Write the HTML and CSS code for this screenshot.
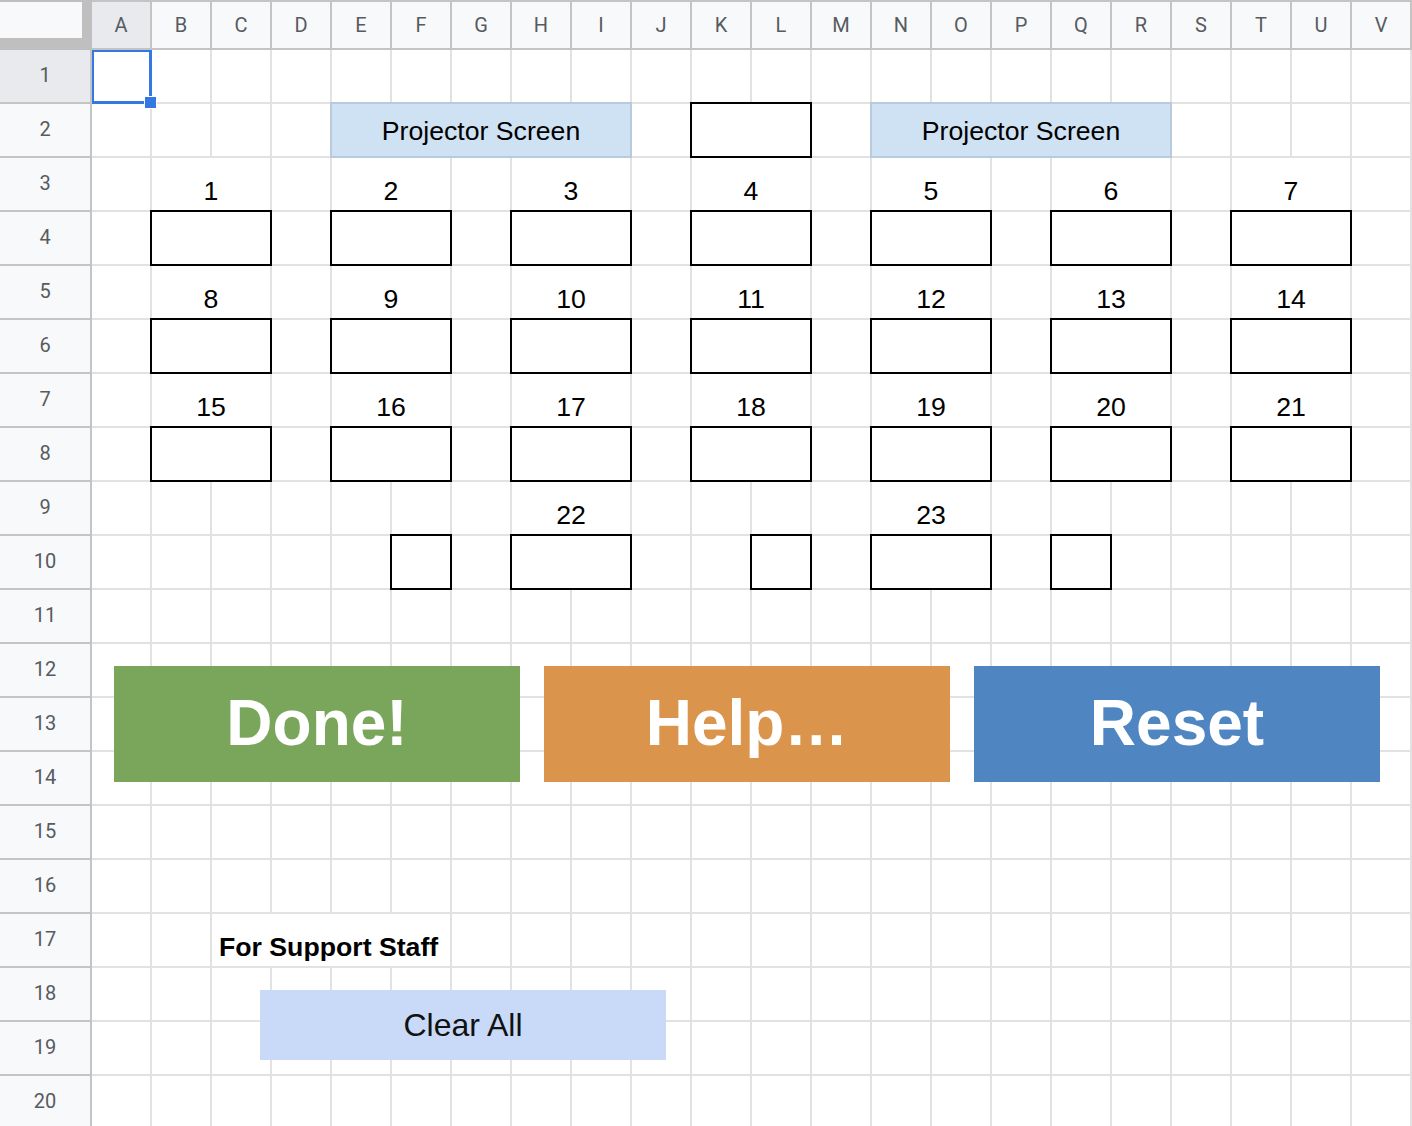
FILE: index.html
```html
<!DOCTYPE html>
<html lang="en">
<head>
<meta charset="utf-8">
<title>Seating Sheet</title>
<link rel="stylesheet" href="styles.css">
</head>
<body>
<div class="sheet">
  <div class="colheads">
    <div class="corner"><div class="corner-box"></div></div>
    <div class="colhead selected">A</div>
    <div class="colhead">B</div>
    <div class="colhead">C</div>
    <div class="colhead">D</div>
    <div class="colhead">E</div>
    <div class="colhead">F</div>
    <div class="colhead">G</div>
    <div class="colhead">H</div>
    <div class="colhead">I</div>
    <div class="colhead">J</div>
    <div class="colhead">K</div>
    <div class="colhead">L</div>
    <div class="colhead">M</div>
    <div class="colhead">N</div>
    <div class="colhead">O</div>
    <div class="colhead">P</div>
    <div class="colhead">Q</div>
    <div class="colhead">R</div>
    <div class="colhead">S</div>
    <div class="colhead">T</div>
    <div class="colhead">U</div>
    <div class="colhead">V</div>
  </div>
  <div class="body">
    <div class="rowheads">
      <div class="rowhead selected">1</div>
      <div class="rowhead">2</div>
      <div class="rowhead">3</div>
      <div class="rowhead">4</div>
      <div class="rowhead">5</div>
      <div class="rowhead">6</div>
      <div class="rowhead">7</div>
      <div class="rowhead">8</div>
      <div class="rowhead">9</div>
      <div class="rowhead">10</div>
      <div class="rowhead">11</div>
      <div class="rowhead">12</div>
      <div class="rowhead">13</div>
      <div class="rowhead">14</div>
      <div class="rowhead">15</div>
      <div class="rowhead">16</div>
      <div class="rowhead">17</div>
      <div class="rowhead">18</div>
      <div class="rowhead">19</div>
      <div class="rowhead">20</div>
    </div>
    <div class="grid">
      <div class="selection"><div class="handle"></div></div>

      <div class="screen screen-left">Projector Screen</div>
      <div class="box at-k r2"></div>
      <div class="screen screen-right">Projector Screen</div>

      <div class="label at-b r3">1</div>
      <div class="label at-e r3">2</div>
      <div class="label at-h r3">3</div>
      <div class="label at-k r3">4</div>
      <div class="label at-n r3">5</div>
      <div class="label at-q r3">6</div>
      <div class="label at-t r3">7</div>
      <div class="box at-b r4"></div>
      <div class="box at-e r4"></div>
      <div class="box at-h r4"></div>
      <div class="box at-k r4"></div>
      <div class="box at-n r4"></div>
      <div class="box at-q r4"></div>
      <div class="box at-t r4"></div>

      <div class="label at-b r5">8</div>
      <div class="label at-e r5">9</div>
      <div class="label at-h r5">10</div>
      <div class="label at-k r5">11</div>
      <div class="label at-n r5">12</div>
      <div class="label at-q r5">13</div>
      <div class="label at-t r5">14</div>
      <div class="box at-b r6"></div>
      <div class="box at-e r6"></div>
      <div class="box at-h r6"></div>
      <div class="box at-k r6"></div>
      <div class="box at-n r6"></div>
      <div class="box at-q r6"></div>
      <div class="box at-t r6"></div>

      <div class="label at-b r7">15</div>
      <div class="label at-e r7">16</div>
      <div class="label at-h r7">17</div>
      <div class="label at-k r7">18</div>
      <div class="label at-n r7">19</div>
      <div class="label at-q r7">20</div>
      <div class="label at-t r7">21</div>
      <div class="box at-b r8"></div>
      <div class="box at-e r8"></div>
      <div class="box at-h r8"></div>
      <div class="box at-k r8"></div>
      <div class="box at-n r8"></div>
      <div class="box at-q r8"></div>
      <div class="box at-t r8"></div>

      <div class="label at-h r9">22</div>
      <div class="label at-n r9">23</div>
      <div class="box one-f r10"></div>
      <div class="box at-h r10"></div>
      <div class="box one-l r10"></div>
      <div class="box at-n r10"></div>
      <div class="box one-q r10"></div>

      <div class="label staff">For Support Staff</div>

      <div class="actions">
        <div class="action done">Done!</div>
        <div class="action help">Help…</div>
        <div class="action reset">Reset</div>
      </div>
      <div class="clear-btn">Clear All</div>
    </div>
  </div>
</div>
</body>
</html>
```

FILE: styles.css
```css
* {
  box-sizing: border-box;
}

html, body {
  margin: 0;
  padding: 0;
  background: #ffffff;
  overflow: hidden;
}

.sheet {
  width: 1412px;
  font-family: "Liberation Sans", Arial, sans-serif;
}

/* ---------- column headers ---------- */
.colheads {
  display: flex;
  height: 50px;
}

.corner {
  width: 92px;
  height: 50px;
  background: #bfbfbf;
  padding-top: 2px;
}

.corner-box {
  width: 82px;
  height: 36px;
  background: #f8f9fa;
}

.colhead {
  width: 60px;
  height: 50px;
  flex: none;
  background: #f8f9fa;
  border-top: 2px solid #c4c4c4;
  border-right: 2px solid #c4c4c4;
  border-bottom: 2px solid #c4c4c4;
  display: flex;
  align-items: center;
  justify-content: center;
  font-family: Roboto, "Liberation Sans", sans-serif;
  font-size: 20px;
  color: #575b60;
}

.colhead.selected {
  background: #e8eaed;
}

/* ---------- body ---------- */
.body {
  display: flex;
}

.rowheads {
  width: 92px;
  flex: none;
  display: flex;
  flex-direction: column;
}

.rowhead {
  height: 54px;
  background: #f8f9fa;
  border-right: 2px solid #c4c4c4;
  border-bottom: 2px solid #c4c4c4;
  display: flex;
  align-items: center;
  justify-content: center;
  padding-bottom: 3px;
  font-family: Roboto, "Liberation Sans", sans-serif;
  font-size: 20px;
  color: #575b60;
}

.rowhead.selected {
  background: #e8eaed;
}

/* ---------- cell grid ---------- */
.grid {
  position: relative;
  display: grid;
  grid-template-columns: repeat(22, 60px);
  grid-template-rows: repeat(20, 54px);
  background-color: #ffffff;
  background-image:
    linear-gradient(to right, transparent 58px, #e2e2e2 58px),
    linear-gradient(to bottom, transparent 52px, #e2e2e2 52px);
  background-size: 60px 54px, 60px 54px;
}

/* placement */
.at-b { grid-column: 2 / span 2; }
.at-e { grid-column: 5 / span 2; }
.at-h { grid-column: 8 / span 2; }
.at-k { grid-column: 11 / span 2; }
.at-n { grid-column: 14 / span 2; }
.at-q { grid-column: 17 / span 2; }
.at-t { grid-column: 20 / span 2; }
.one-f { grid-column: 6; }
.one-l { grid-column: 12; }
.one-q { grid-column: 17; }

.r2 { grid-row: 2; }
.r3 { grid-row: 3; }
.r4 { grid-row: 4; }
.r5 { grid-row: 5; }
.r6 { grid-row: 6; }
.r7 { grid-row: 7; }
.r8 { grid-row: 8; }
.r9 { grid-row: 9; }
.r10 { grid-row: 10; }

/* selected cell A1 */
.selection {
  grid-column: 1;
  grid-row: 1;
  position: relative;
  z-index: 3;
  border-top: 2px solid #3478e3;
  border-left: 2px solid #3478e3;
  border-right: 3px solid #3478e3;
  border-bottom: 3px solid #3478e3;
}

.handle {
  position: absolute;
  right: -8px;
  bottom: -8px;
  width: 13px;
  height: 13px;
  background: #3478e3;
  border: 1px solid #ffffff;
}

/* projector screens */
.screen {
  grid-row: 2;
  margin: -2px 0 0 -2px;
  background: #cfe2f3;
  border: 2px solid #b8cadc;
  display: flex;
  align-items: center;
  justify-content: center;
  font-size: 26.67px;
  line-height: 30px;
  color: #000;
  padding-top: 2px;
}

.screen-left { grid-column: 5 / span 5; }
.screen-right { grid-column: 14 / span 5; }

/* seat boxes */
.box {
  margin: -2px 0 0 -2px;
  background: #ffffff;
  border: 2px solid #000000;
}

/* number labels (merged cells) */
.label {
  background: #ffffff;
  border-right: 2px solid #e2e2e2;
  border-bottom: 2px solid #e2e2e2;
  display: flex;
  align-items: flex-end;
  justify-content: center;
  padding-bottom: 4px;
  font-size: 26.67px;
  line-height: 30px;
  color: #000;
}

.staff {
  grid-column: 3 / span 4;
  grid-row: 17;
  justify-content: flex-start;
  padding-left: 7px;
  font-weight: bold;
  white-space: nowrap;
}

/* drawings / buttons */
.actions {
  position: absolute;
  left: 22px;
  top: 616px;
  display: flex;
  gap: 24px;
  z-index: 2;
}

.action {
  width: 406px;
  height: 116px;
  display: flex;
  align-items: center;
  justify-content: center;
  color: #ffffff;
  font-size: 64px;
  font-weight: bold;
  padding-bottom: 2px;
}

.done { background: #79a65b; }
.help { background: #da944b; }
.reset { background: #4f86c1; }

.clear-btn {
  position: absolute;
  left: 168px;
  top: 940px;
  width: 406px;
  height: 70px;
  background: #c9daf8;
  display: flex;
  align-items: center;
  justify-content: center;
  font-size: 32px;
  color: #111;
  z-index: 2;
}
```
